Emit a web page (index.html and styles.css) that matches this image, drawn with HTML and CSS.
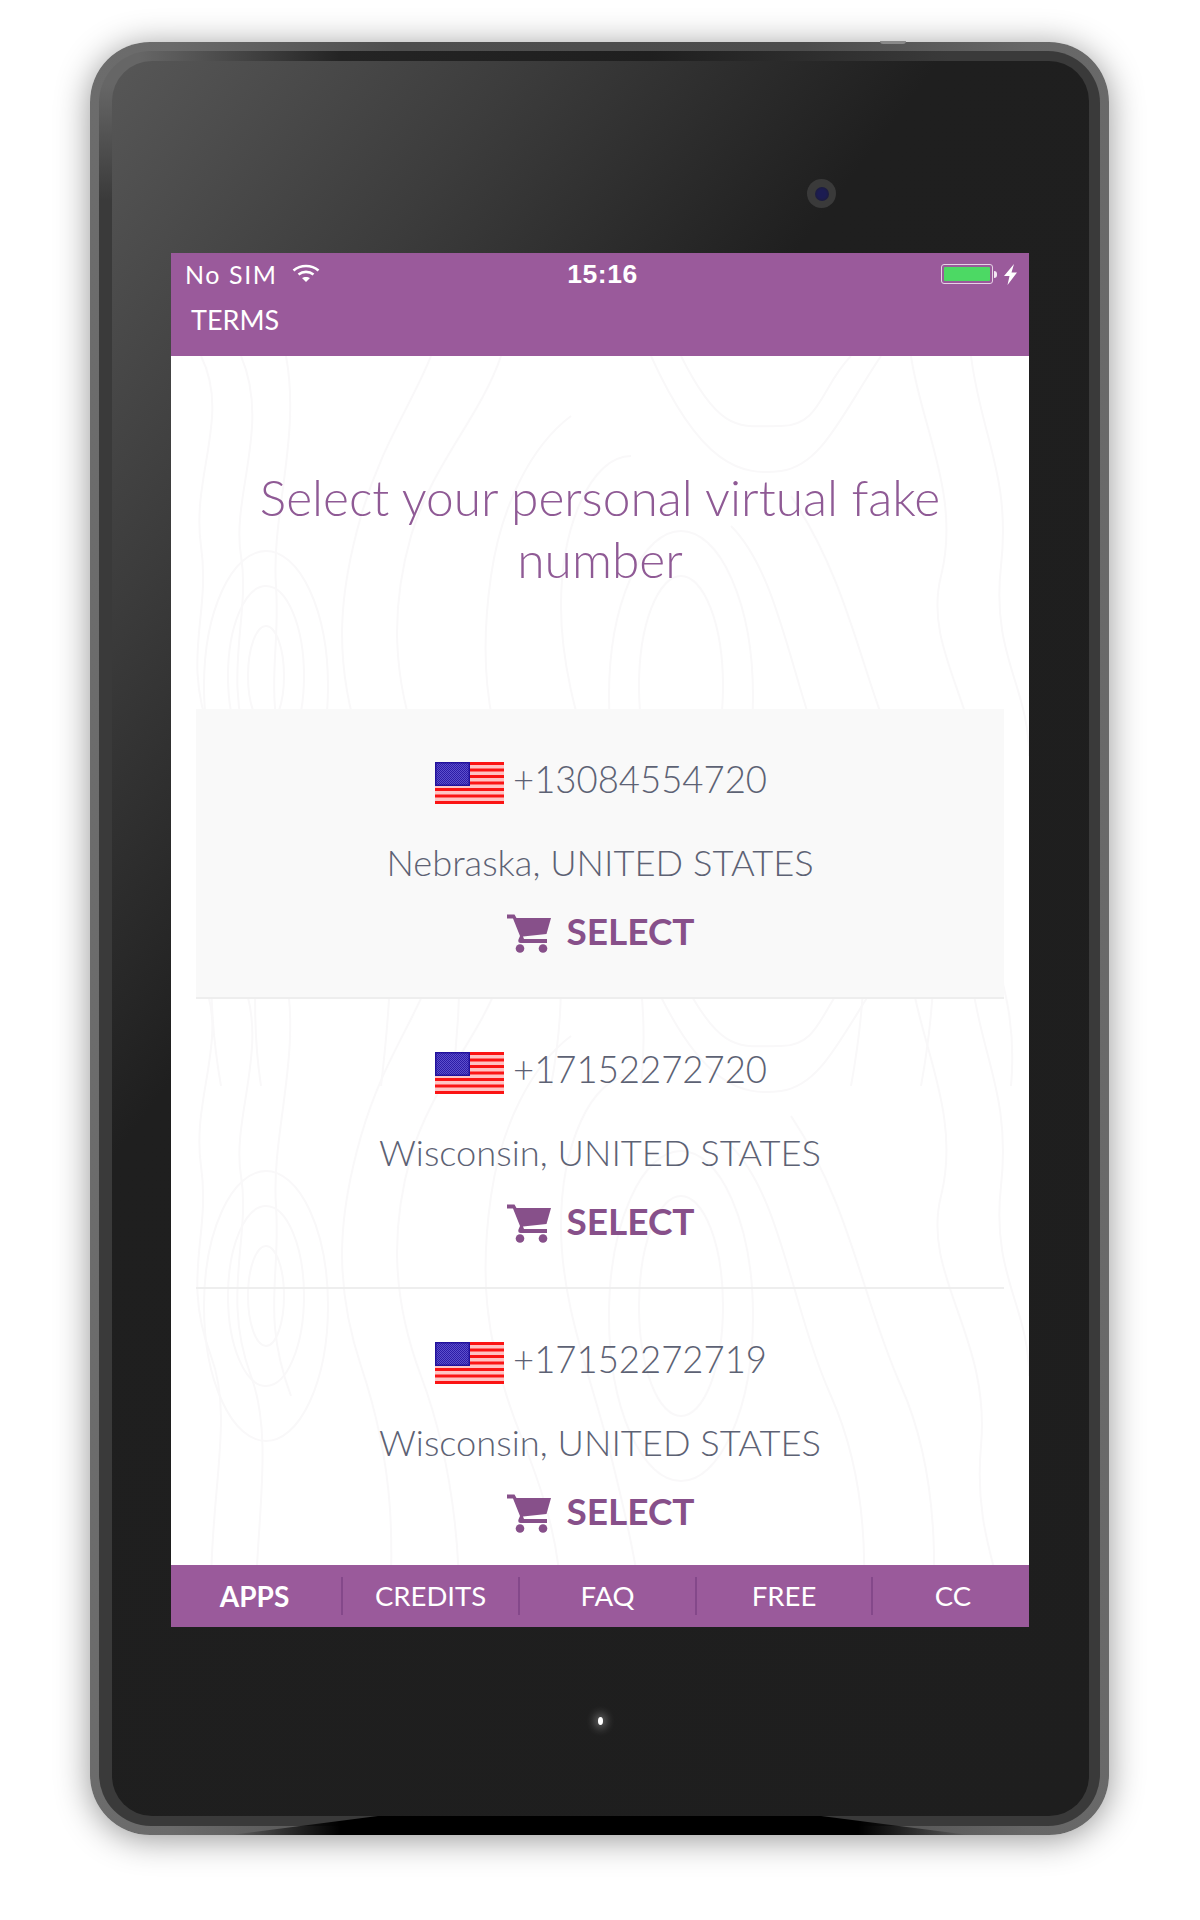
FILE: index.html
```html
<!DOCTYPE html>
<html>

<head>
    <meta charset='utf-8'>
    <title>Select number</title>
    <link rel="stylesheet" href="styles.css">
</head>

<body>
    <svg class="defs" width="0" height="0">
        <defs>
            <pattern id="stars" width="2" height="2" patternUnits="userSpaceOnUse">
                <rect width="2" height="2" fill="#2c1ca6" />
                <rect width="1" height="1" fill="#5d50cc" />
                <rect x="1" y="1" width="1" height="1" fill="#5d50cc" />
            </pattern>
            <symbol id="flag" viewBox="0 0 69 42">
                <rect width="69" height="42" fill="#ffc4c4" />
                <path stroke="#fb1414" stroke-width="3" d="M0 1.600H69M0 8H69M0 14.500H69M0 21H69M0 27.400H69M0 33.900H69M0 40.400H69" />
                <rect width="35" height="24" fill="#22129c" />
                <rect x="1.500" y="1.500" width="32" height="21" fill="url(#stars)" />
            </symbol>
            <symbol id="cart" viewBox="0 0 44 39">
                <path d="M0 .5H7.500L9.500 4H44L39.500 20 16 22.500 17 25H40V29H13.500Q10.500 29 11.500 25.500L13 22 6 4.500H0Z" />
                <circle cx="13" cy="34.500" r="4.300" />
                <circle cx="36" cy="34.500" r="4.300" />
            </symbol>
            <symbol id="topo" viewBox="0 0 858 730">
                <g fill="none" stroke="#f9f8f9" stroke-width="2">
                    <path d="M30 0C60 60 20 120 30 190S10 300 40 380 20 560 50 730" />
                    <path d="M70 0C100 70 60 140 70 200S50 320 80 400 70 600 90 730" />
                    <path d="M115 0C130 80 100 160 105 230S90 340 120 420" />
                    <path d="M260 0C240 50 210 90 190 160S160 300 190 390 230 560 210 730" />
                    <path d="M330 0C310 60 260 110 240 180S220 320 250 400 300 600 280 730" />
                    <path d="M400 60C360 90 330 150 320 220S310 360 350 460 400 620 380 730" />
                    <path d="M460 100C420 100 390 170 390 250S420 400 440 480 480 640 470 730" />
                    <path d="M510 0C550 80 570 70 610 70S650 30 680 0" />
                    <path d="M480 0C530 110 570 120 610 115S670 60 710 0" />
                    <path d="M560 170C610 220 620 330 660 420S700 620 680 730" />
                    <path d="M620 140C680 230 690 320 730 410S770 620 750 730" />
                    <path d="M740 0C750 70 790 140 770 220S820 360 810 470 850 620 840 730" />
                    <path d="M800 0C810 80 840 120 830 210S858 330 858 400" />
                    <ellipse cx="95" cy="320" rx="18" ry="50" />
                    <ellipse cx="95" cy="320" rx="38" ry="90" />
                    <ellipse cx="95" cy="330" rx="62" ry="135" />
                    <ellipse cx="510" cy="330" rx="42" ry="110" />
                    <ellipse cx="510" cy="340" rx="72" ry="165" />
                </g>
            </symbol>
        </defs>
    </svg>

    <div class="page">
        <div class="device">
            <span class="notch"></span>
            <div class="device-mid">
                <div class="device-face">
                    <span class="camera"><span class="lens"></span></span>
                    <div class="screen">
                        <header class="topbar">
                            <div class="statusbar">
                                <div class="carrier">
                                    <span>No SIM</span>
                                    <svg class="wifi" viewBox="0 0 28 18" fill="none" stroke="#fff" stroke-width="2.600">
                                        <path d="M1.500 6.500C8.500 .5 19.500 .5 26.500 6.500" />
                                        <path d="M6.500 10.500C11 7 17 7 21.500 10.500" />
                                        <path d="M10 14 14 18 18 14C16 12.500 12 12.500 10 14Z" fill="#fff" stroke="none" />
                                    </svg>
                                </div>
                                <span class="clock">15:16</span>
                                <div class="power">
                                    <span class="battery"><span class="charge"></span></span>
                                    <span class="nub"></span>
                                    <svg class="bolt" viewBox="0 0 13 21">
                                        <path d="M10 0 0 12H5.500L3.500 21 13 8.500H7.500Z" fill="#fff" />
                                    </svg>
                                </div>
                            </div>
                            <a class="terms">TERMS</a>
                        </header>

                        <main class="content">
                            <svg class="topo-bg" width="858" height="1209">
                                <use href="#topo" width="858" height="730" />
                                <use href="#topo" y="620" width="858" height="730" />
                            </svg>
                            <h1 class="title">Select your personal virtual fake number</h1>
                            <ul class="numbers">
                                <li class="number-row first">
                                    <div class="number"><svg class="flag"><use href="#flag" /></svg>+13084554720</div>
                                    <div class="place">Nebraska, UNITED STATES</div>
                                    <div class="select"><svg class="cart"><use href="#cart" /></svg>SELECT</div>
                                </li>
                                <li class="number-row">
                                    <div class="number"><svg class="flag"><use href="#flag" /></svg>+17152272720</div>
                                    <div class="place">Wisconsin, UNITED STATES</div>
                                    <div class="select"><svg class="cart"><use href="#cart" /></svg>SELECT</div>
                                </li>
                                <li class="number-row">
                                    <div class="number"><svg class="flag"><use href="#flag" /></svg>+17152272719</div>
                                    <div class="place">Wisconsin, UNITED STATES</div>
                                    <div class="select"><svg class="cart"><use href="#cart" /></svg>SELECT</div>
                                </li>
                            </ul>
                        </main>

                        <nav class="tabs">
                            <a class="tab active">APPS</a>
                            <a class="tab">CREDITS</a>
                            <a class="tab">FAQ</a>
                            <a class="tab">FREE</a>
                            <a class="tab">CC</a>
                        </nav>
                    </div>
                    <span class="led"></span>
                </div>
            </div>
            <span class="chin"></span>
        </div>
    </div>
</body>

</html>
```

FILE: styles.css
```css
body,
html {
    margin: 0;
    padding: 0;
    background: #fff;
    font-family: "Lato", "Liberation Sans", sans-serif;
}

.defs {
    position: absolute;
}

.page {
    height: 1920px;
    box-sizing: border-box;
    padding: 42px 91px 0 90px;
    overflow: hidden;
}

/* tablet frame, three nested rings */
.device {
    position: relative;
    height: 1793px;
    box-sizing: border-box;
    padding: 9px;
    border-radius: 60px;
    background: linear-gradient(90deg, #6c6c6c 0, #6a6a6a 8%, #4e4e4e 30%, #4c4c4c 70%, #666 92%, #696969 100%);
    box-shadow: 0 4px 34px rgba(0, 0, 0, .42);
}

.device-mid {
    height: 100%;
    box-sizing: border-box;
    padding: 10px 11px 10px 13px;
    border-radius: 52px;
    background:
        linear-gradient(90deg, #666 4%, #242424 24%, #1f1f1f 55%, #3a3a3a 85%) top / 100% 34px no-repeat,
        linear-gradient(180deg, #666 34px, #3a3a3a 150px) left / 50% 100% no-repeat,
        #3a3a3a;
}

.device-face {
    position: relative;
    height: 100%;
    box-sizing: border-box;
    padding: 192px 60px 189px 59px;
    border-radius: 40px;
    background: linear-gradient(127deg, #575757 0, #3c3c3c 18%, #1f1f1f 36%, #1e1e1e 100%);
}

.notch {
    position: absolute;
    left: 790px;
    top: -1px;
    width: 26px;
    height: 3px;
    border-radius: 0 0 12px 12px;
    background: #8a8a8a;
}

.camera {
    position: absolute;
    left: 695px;
    top: 118px;
    width: 29px;
    height: 29px;
    display: flex;
    align-items: center;
    justify-content: center;
    border-radius: 50%;
    background: #3a3a3a;
}

.lens {
    width: 14px;
    height: 14px;
    border-radius: 50%;
    background: radial-gradient(#1c1c52 40%, #1c1c2a 100%);
}

.led {
    position: absolute;
    left: 486px;
    top: 1656px;
    width: 5px;
    height: 8px;
    border-radius: 50%;
    background: #fff;
    box-shadow: 0 0 9px 4px rgba(255, 255, 255, .28);
}

/* black reflection along the lower edge */
.chin {
    position: absolute;
    left: 140px;
    right: 140px;
    bottom: 0;
    height: 19px;
    background: linear-gradient(90deg, transparent 0, #000 15%, #000 85%, transparent 100%);
    clip-path: polygon(20% 0, 80% 0, 100% 100%, 0 100%);
}

.screen {
    display: flex;
    flex-direction: column;
    height: 1374px;
    background: #fff;
}

.topbar {
    height: 103px;
    flex: none;
    box-sizing: border-box;
    padding: 5px 0 0;
    background: #9a5a9b;
    color: #fff;
}

.statusbar {
    display: grid;
    grid-template-columns: 1fr auto 1fr;
    align-items: center;
    height: 32px;
    padding: 0 12px 0 14px;
}

.carrier {
    display: flex;
    align-items: center;
    gap: 14px;
    font-size: 25px;
    letter-spacing: 1.600px;
}

.wifi {
    width: 28px;
    height: 18px;
    margin-top: -2px;
}

.clock {
    padding-left: 3px;
    font-family: "Liberation Sans", sans-serif;
    font-size: 26.500px;
    font-weight: 700;
    letter-spacing: .5px;
}

.power {
    display: flex;
    align-items: center;
    justify-content: flex-end;
}

.battery {
    display: block;
    width: 52px;
    height: 20px;
    box-sizing: border-box;
    padding: 2px;
    border: 1.500px solid #e6d3e6;
    border-radius: 3px;
}

.charge {
    display: block;
    height: 100%;
    border-radius: 1px;
    background: #4cd964;
}

.nub {
    width: 3px;
    height: 7px;
    border-radius: 0 3px 3px 0;
    background: #f3e9f3;
    margin-left: 1px;
}

.bolt {
    width: 13px;
    height: 21px;
    margin-left: 7px;
}

.terms {
    display: block;
    padding: 15px 0 0 20px;
    font-size: 27px;
    line-height: 30px;
}

.content {
    position: relative;
    flex: 1;
    min-height: 0;
    overflow: hidden;
    padding: 0 25px;
}

.topo-bg {
    position: absolute;
    left: 0;
    top: 0;
}

.title {
    position: relative;
    margin: 0;
    padding: 110px 30px 119px;
    font-size: 49.700px;
    font-weight: 300;
    line-height: 62px;
    text-align: center;
    color: #8f5a95;
}

.numbers {
    position: relative;
    list-style: none;
    margin: 0;
    padding: 0;
}

.number-row {
    display: flex;
    flex-direction: column;
    align-items: center;
    height: 290px;
    box-sizing: border-box;
    padding-top: 46px;
    border-bottom: 2px solid #eee;
}

.number-row.first {
    background: #f9f9f9;
}

.number {
    display: flex;
    align-items: flex-start;
    gap: 9px;
    height: 48px;
    padding-left: 2px;
    font-size: 36.500px;
    font-weight: 300;
    line-height: 48px;
    color: #5d6274;
}

.flag {
    width: 69px;
    height: 42px;
    margin-top: 7px;
}

.place {
    margin-top: 35px;
    font-size: 36.300px;
    font-weight: 300;
    line-height: 48px;
    color: #5d6274;
}

.select {
    display: flex;
    align-items: center;
    gap: 15px;
    margin-top: 21px;
    font-size: 37px;
    font-weight: 700;
    line-height: 48px;
    color: #87508a;
}

.cart {
    width: 44px;
    height: 39px;
    margin: 4px 0 0 2px;
    fill: #87508a;
}

.tabs {
    display: grid;
    grid-template-columns: 172px 177px 177px 176px 156px;
    height: 62px;
    flex: none;
    align-items: center;
    background: #9a5a9b;
}

.tab {
    height: 38px;
    line-height: 38px;
    text-align: center;
    font-size: 27.500px;
    color: #fff;
    border-right: 2px solid #84488a;
}

.tab:last-child {
    border-right: 0;
    padding-left: 4px;
}

.tab.active {
    font-weight: 700;
    font-size: 28px;
    padding-right: 3px;
}
```
